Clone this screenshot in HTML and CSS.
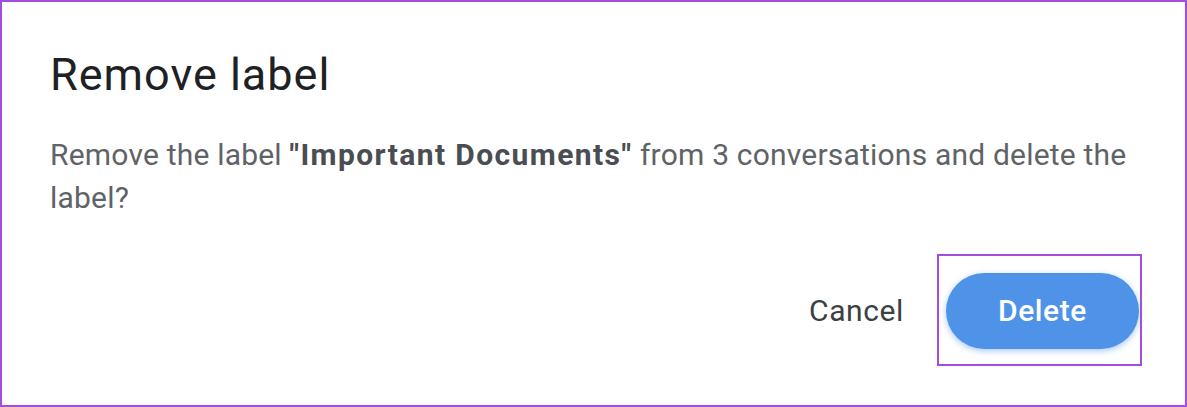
FILE: index.html
```html
<!DOCTYPE html>
<html>
<head>
<title>Remove label</title>
<link rel="stylesheet" href="styles.css">
</head>
<body>

<div class="dialog">
    <h1 class="title">Remove label</h1>
    <p class="message">Remove the label <b>"Important Documents"</b> from 3 conversations and delete the label?</p>
    <div class="actions">
        <div class="button cancel">Cancel</div>
        <div class="highlight">
            <div class="button delete">Delete</div>
        </div>
    </div>
</div>

</body>
</html>
```

FILE: styles.css
```css
body {
    margin: 0;
    font-family: Roboto, "Liberation Sans", sans-serif;
}
.dialog {
    width: 1187px;
    height: 407px;
    box-sizing: border-box;
    border: 2px solid #a24de0;
    background: #fff;
    padding: 47px 56px 0 48px;
}
.title {
    margin: 0;
    font-size: 45px;
    line-height: 52px;
    font-weight: 400;
    letter-spacing: 1px;
    color: #202124;
}
.message {
    margin: 32px 0 0 0;
    font-size: 30px;
    line-height: 43px;
    letter-spacing: 0.2px;
    color: #5f6368;
}
.message b {
    font-weight: 700;
    letter-spacing: 1.4px;
    color: #4a4d51;
}
.actions {
    display: flex;
    justify-content: flex-end;
    align-items: center;
    gap: 33px;
    margin-top: 35px;
    margin-right: -13px;
}
.button {
    font-size: 30px;
    letter-spacing: 0.6px;
    cursor: pointer;
}
.cancel {
    color: #3c4043;
    font-weight: 400;
}
.highlight {
    border: 2px solid #a24de0;
    padding: 17px 1px 15px 7px;
}
.delete {
    width: 193px;
    height: 76px;
    line-height: 76px;
    text-align: center;
    border-radius: 38px;
    background: #4f93e8;
    color: #fff;
    font-weight: 500;
    box-shadow: 0 2px 6px rgba(79, 147, 232, 0.5);
}
```
